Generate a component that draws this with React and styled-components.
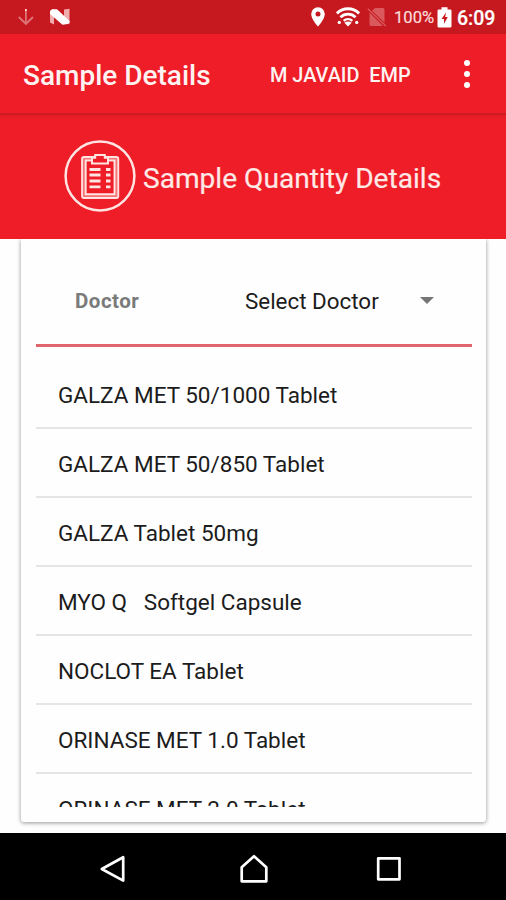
import React from "react";
import styled, { createGlobalStyle } from "styled-components";

const products = [
  "GALZA MET 50/1000 Tablet",
  "GALZA MET 50/850 Tablet",
  "GALZA Tablet 50mg",
  "MYO Q   Softgel Capsule",
  "NOCLOT EA Tablet",
  "ORINASE MET 1.0 Tablet",
  "ORINASE MET 2.0 Tablet",
];

const StatusBar = () => (
  <Status>
    <svg width="60" height="34" viewBox="0 0 60 34" fill="none">
      <path d="M11.9 9V11.500" stroke="#ffd9d9" strokeWidth="1.8" />
      <path d="M11.9 12V23.5" stroke="#de7477" strokeWidth="1.8" />
      <path d="M4.8 17l7.1 7 7.1-7" stroke="#de7477" strokeWidth="1.9" />
      <path d="M36 10.5l4-1.5v15.4l-4-1.8zM50 9.6l5.500-.8v15.400l-5.500-1.600z" fill="#f2abad" />
      <path d="M36 11.500l2-2.300h5L56 21.500l-2 2.500-5.500.800L36 14z" fill="#fff" />
    </svg>
    <StatusRight>
      <svg width="14" height="20" viewBox="0 0 14 20">
        <path
          d="M7 .3A6.8 6.8 0 0 0 .2 7.1C.2 12.3 7 19.6 7 19.6s6.8-7.3 6.8-12.5A6.8 6.8 0 0 0 7 .3zm0 9.3a2.5 2.5 0 1 1 0-5 2.5 2.5 0 0 1 0 5z"
          fill="#fff"
        />
      </svg>
      <WifiIcon width="24" height="20" viewBox="0 0 25 20" fill="none" stroke="#fff">
        <path d="M1 6.2C7.5-.2 17.5-.2 24 6.2" strokeWidth="3" />
        <path d="M4.6 10.300c4.500-4.300 11.300-4.300 15.800 0" strokeWidth="2.8" />
        <path d="M8 14c2.600-2.500 6.400-2.500 9 0" strokeWidth="2.4" />
        <path d="M8.7 16c2.200-1.600 5.400-1.600 7.600 0l-3.800 3.800z" fill="#fff" stroke="none" />
        <circle cx="3.4" cy="15.7" r="1.7" fill="#fff" stroke="none" />
        <circle cx="21.6" cy="15.7" r="1.7" fill="#fff" stroke="none" />
      </WifiIcon>
      <svg width="20" height="20" viewBox="0 0 20 20">
        <path
          d="M8 1h8q1.500 0 1.500 1.500V15.500L5 3.700zM2.500 5.500L16 19H4q-1.500 0-1.500-1.500z"
          fill="#d9595d"
        />
        <path d="M.8 1.7L18.8 19" stroke="#d9595d" strokeWidth="1.3" />
      </svg>
      <Percent>100%</Percent>
      <svg width="15" height="21" viewBox="0 0 15 21">
        <path
          d="M1.800 2.500H4.500V.3h6v2.200h2.700q1.300 0 1.300 1.300v15.400q0 1.300-1.300 1.300H1.800q-1.300 0-1.300-1.300V3.800q0-1.300 1.300-1.300z"
          fill="#fff"
        />
        <path d="M9 5.500L4.500 11.900h2.500v4.900l3.800-6.700H8.200z" fill="#c8191f" />
      </svg>
      <Clock>6:09</Clock>
    </StatusRight>
  </Status>
);

const ClipboardIcon = () => (
  <svg width="72" height="72" viewBox="0 0 72 72" fill="none" stroke="#ffe4e2">
    <circle cx="36" cy="36" r="34.4" strokeWidth="2.5" />
    <rect x="18" y="17" width="36.300" height="41" rx="2" strokeWidth="1.8" fill="#f5777a" />
    <rect x="21.7" y="20.500" width="28.8" height="33.700" strokeWidth="1.9" fill="#ee1d27" />
    <path d="M28 23.500v-5.800h3.200v-2.600h9.600v2.600H44v5.800z" strokeWidth="2" fill="#ee1d27" />
    <path
      d="M25.500 29.500h11M25.500 35h11M25.500 41h11M25.500 46.800h11M42 29.500h4.500M42 35h4.500M42 41h4.500M42 46.800h4.500"
      strokeWidth="2.8"
    />
  </svg>
);

export default function App() {
  return (
    <Screen>
      <GlobalStyle />
      <StatusBar />
      <AppBar>
        <Title>Sample Details</Title>
        <User>{"M JAVAID  EMP"}</User>
        <MenuButton aria-label="More options">
          <Dot />
          <Dot />
          <Dot />
        </MenuButton>
      </AppBar>
      <Banner>
        <ClipboardIcon />
        <BannerTitle>Sample Quantity Details</BannerTitle>
      </Banner>
      <Content>
        <Card>
          <DoctorRow>
            <Label>Doctor</Label>
            <Select>
              Select Doctor
              <Caret />
            </Select>
          </DoctorRow>
          <List>
            {products.map((name) => (
              <Item key={name}>{name}</Item>
            ))}
          </List>
        </Card>
      </Content>
      <NavBar>
        <svg width="28" height="30" viewBox="0 0 28 30">
          <path d="M24.2 3.2v23.4L2.8 15z" />
        </svg>
        <svg width="30" height="30" viewBox="0 0 30 30">
          <path d="M2.7 27.3V13.2L15 2.2l12.3 11v14.1z" />
        </svg>
        <svg width="28" height="30" viewBox="0 0 28 30">
          <rect x="3.2" y="4.3" width="21.3" height="21" />
        </svg>
      </NavBar>
    </Screen>
  );
}

const GlobalStyle = createGlobalStyle`
  * {
    box-sizing: border-box;
  }

  body {
    margin: 0;
    background: #fff;
    font-family: Roboto, sans-serif;
  }

  svg {
    display: block;
    flex-shrink: 0;
  }
`;

const Screen = styled.div`
  width: 506px;
  height: 900px;
  display: flex;
  flex-direction: column;
  overflow: hidden;
  background: #fefefe;
`;

const Status = styled.div`
  height: 34px;
  flex-shrink: 0;
  display: flex;
  align-items: center;
  justify-content: space-between;
  padding: 0 11px 0 14px;
  background: #c6191f;
  color: #fff;
`;

const StatusRight = styled.div`
  display: flex;
  align-items: center;
`;

const WifiIcon = styled.svg`
  margin: 0 7px 0 11px;
`;

const Percent = styled.span`
  width: 43px;
  margin: 2px 0 0 7px;
  font-size: 16.6px;
  line-height: 20px;
  -webkit-text-stroke: 0.2px;
  color: #fbdcdc;
`;

const Clock = styled.span`
  width: 38px;
  margin: 3px 0 0 5px;
  font-size: 19.5px;
  line-height: 20px;
  font-weight: 500;
  -webkit-text-stroke: 0.2px;
`;

const AppBar = styled.header`
  height: 79px;
  flex-shrink: 0;
  display: flex;
  align-items: center;
  padding: 3px 30px 0 23px;
  background: #ee1d27;
  color: #fff3f2;
`;

const Title = styled.h1`
  width: 247px;
  margin: 0;
  font-size: 28px;
  font-weight: 500;
`;

const User = styled.span`
  flex: 1;
  white-space: pre;
  font-size: 19.9px;
  font-weight: 500;
`;

const MenuButton = styled.button`
  display: flex;
  flex-direction: column;
  align-items: center;
  gap: 5px;
  width: 18px;
  padding: 0;
  margin-top: -3px;
  border: 0;
  background: none;
`;

const Dot = styled.span`
  width: 6px;
  height: 6px;
  border-radius: 50%;
  background: #fff;
`;

const Banner = styled.section`
  height: 126px;
  flex-shrink: 0;
  display: flex;
  align-items: center;
  gap: 7px;
  padding-left: 64px;
  background: linear-gradient(#c41a20, #e31c25 3px, #ee1d27 6px);
  color: #ffe9e7;
`;

const BannerTitle = styled.h2`
  margin: 5px 0 0;
  font-size: 28.1px;
  font-weight: 400;
  white-space: nowrap;
  -webkit-text-stroke: 0.2px;
`;

const Content = styled.main`
  height: 594px;
  flex-shrink: 0;
  overflow: hidden;
  padding: 0 20px 11px 21px;
`;

const Card = styled.section`
  height: 583px;
  padding: 0 14px 14px 15px;
  border-radius: 0 0 3px 3px;
  background: #fefefe;
  box-shadow: 0 1px 4px rgba(0, 0, 0, 0.42);
`;

const DoctorRow = styled.div`
  height: 108px;
  display: flex;
  align-items: center;
  padding: 18px 38px 0 39px;
  border-bottom: 3px solid #e0656c;
`;

const Label = styled.span`
  width: 170px;
  font-size: 20.5px;
  letter-spacing: 0.5px;
  font-weight: 700;
  color: #7a7a7a;
`;

const Select = styled.div`
  flex: 1;
  display: flex;
  align-items: center;
  justify-content: space-between;
  font-size: 22.4px;
  color: #1c1c1c;
`;

const Caret = styled.span`
  border: 7px solid transparent;
  border-top-color: #757575;
  border-bottom: 0;
`;

const List = styled.ul`
  height: 460px;
  margin: 0;
  padding: 13px 0 0;
  overflow: hidden;
  list-style: none;
`;

const Item = styled.li`
  height: 69px;
  padding: 0 22px;
  border-bottom: 2px solid #e5e5e5;
  font-size: 22.5px;
  line-height: 70px;
  white-space: pre;
  color: #1c1c1c;
`;

const NavBar = styled.nav`
  height: 67px;
  flex-shrink: 0;
  display: grid;
  grid-template-columns: 140px 136px 28px;
  align-items: center;
  padding: 4px 0 0 99px;
  background: #000;

  svg {
    fill: none;
    stroke: #fff;
    stroke-width: 2.7;
    stroke-linejoin: round;
  }
`;
